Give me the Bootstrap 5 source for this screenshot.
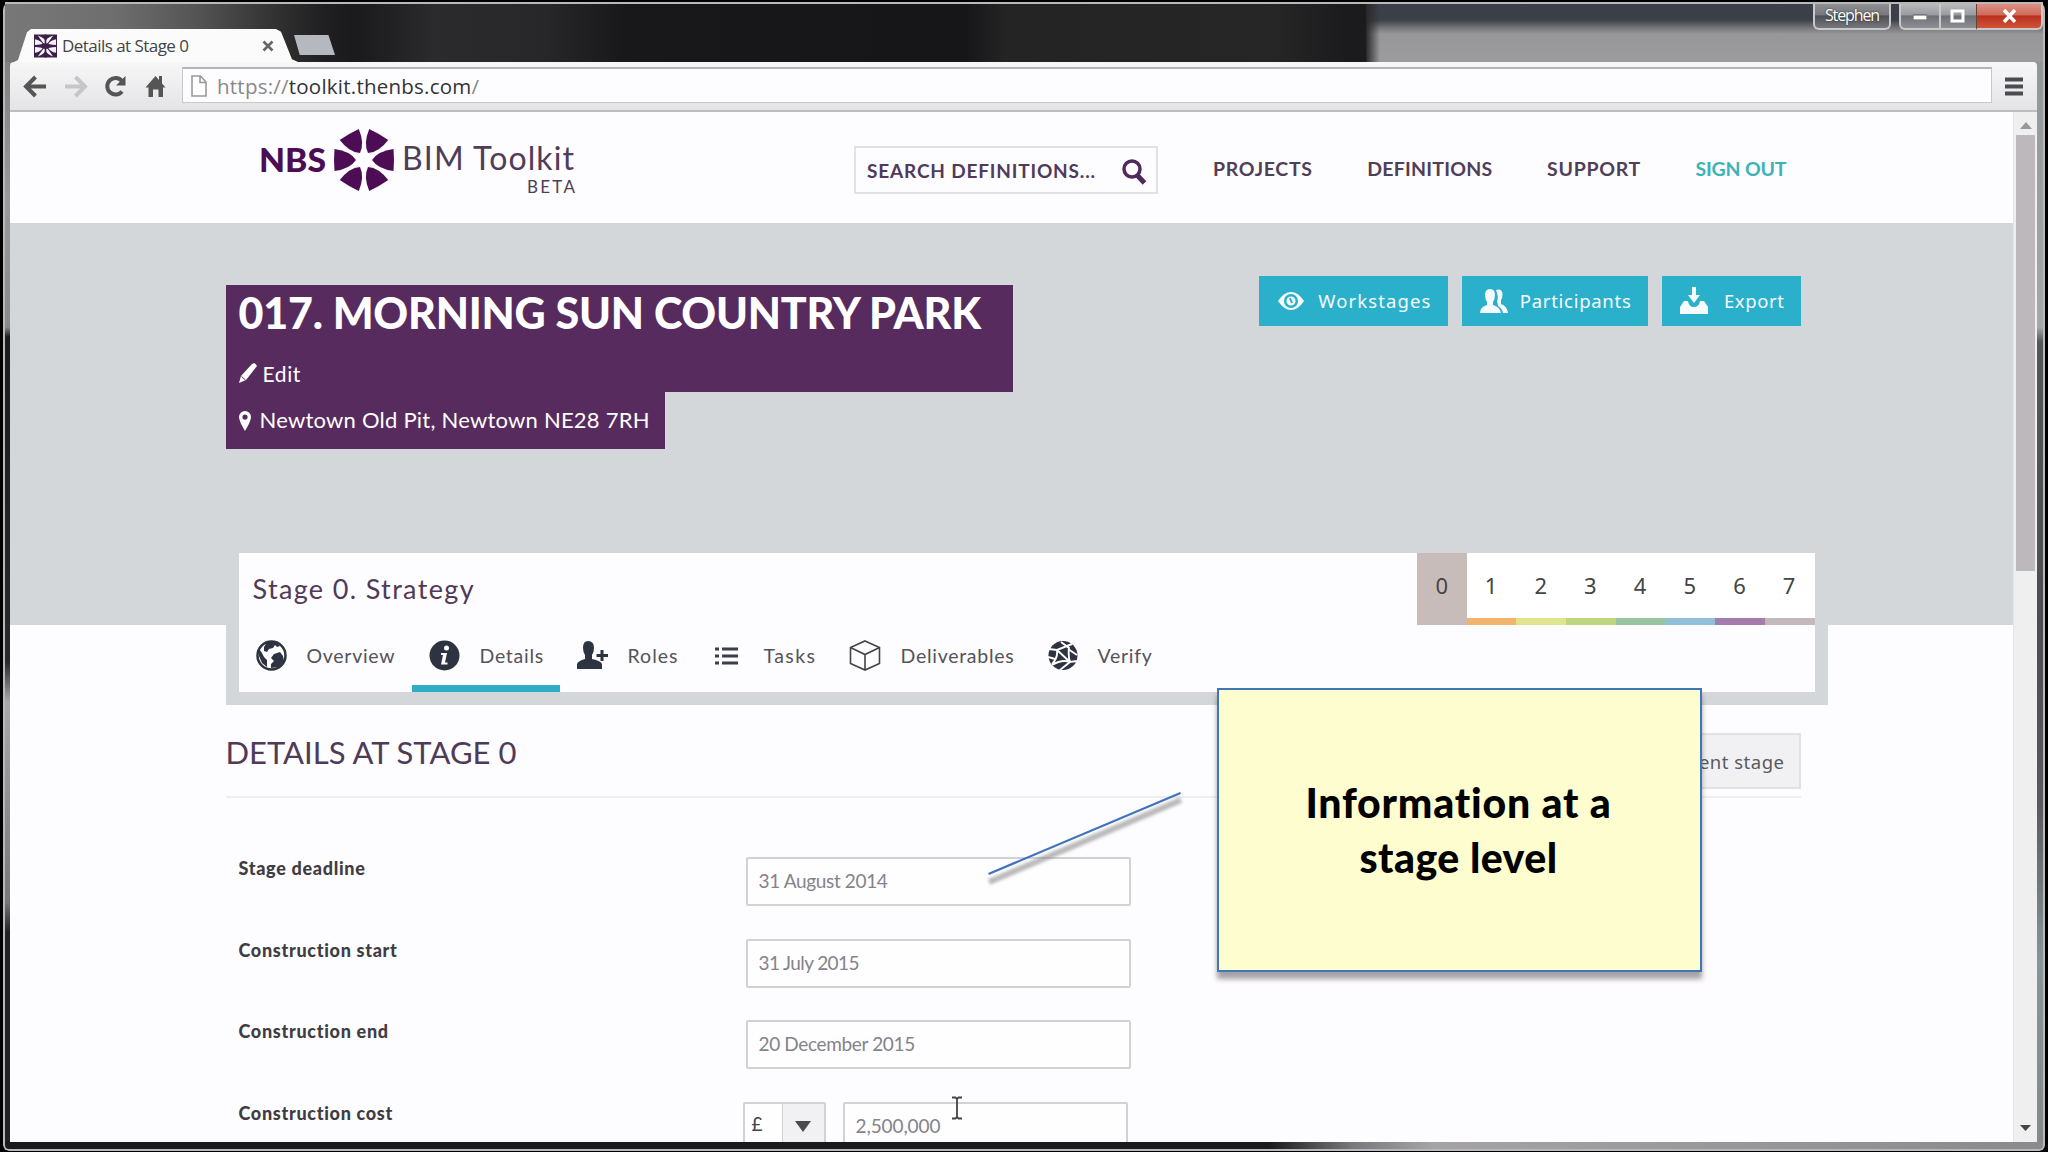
<!DOCTYPE html>
<html lang="en">
<head>
<meta charset="utf-8">
<title>Details at Stage 0</title>
<link href="https://cdn.jsdelivr.net/npm/bootstrap@5.3.0/dist/css/bootstrap.min.css" rel="stylesheet">
<style>
html,body{height:100%;overflow:hidden}
body{background:#000;font-family:Lato,"Open Sans",sans-serif;color:#4a4650;line-height:1.2}
svg{display:block;flex:none}
.t{white-space:nowrap;display:inline-block}
/* browser window */
.win{width:2042px;height:1149px;margin:2px 3px 0 3px;border-radius:8px 8px 6px 6px;box-shadow:inset 0 0 0 2px #b9b9bb;padding:0 8px 7px 7px;
 background:linear-gradient(90deg,#1b191b 0,#1b191b 62%,#77767a 66%,#a5a3a6 70%,#8b898c 100%) bottom/100% 10px no-repeat,
 linear-gradient(180deg,#8f9294 0,#a5a8aa 325px,#55565a 340px,#4c4d50 620px,#59595e 800px,#879698 960px,#858788 1149px) right/12px 100% no-repeat,
 linear-gradient(180deg,#777 0,#999 200px,#8a8a8a 325px,#1d1b1d 335px,#2a282a 660px,#a9a8aa 700px,#777 900px,#222 930px) left/9px 100% no-repeat,#222}
.titlebar{height:60px;border-top:2px solid #b9b9bb;margin:0 -6px 0 -5px;padding-left:5px;
 background:linear-gradient(90deg,rgba(40,40,42,1) 0,rgba(40,40,42,0) 14px) 1361px 0/14px 100% no-repeat,
 linear-gradient(180deg,#3b3f48 0,#3c4049 16px,#77777b 24px,#979699 30px,#9b9a9d 100%) 1361px 0/700px 100% no-repeat,
 linear-gradient(90deg,#787878 0,#6e6e6e 110px,#555 190px,#3a3a3a 250px,#1f1e20 320px,#1a191b 350px,#2b2a2c 430px,#272628 540px,#181719 620px,#161517 960px,#242425 1000px,#262627 1270px,#1b1a1c 1340px)}
.tab-shape{width:284px;height:33px;background:#fbfbfc;clip-path:polygon(0 100%,4px 94%,13px 10%,17px 0,262px 0,267px 8%,278px 92%,284px 100%);padding:0 24px 0 20px;margin-left:4px}
.tabtitle{font:17px/22px "Open Sans",sans-serif;color:#444;margin-left:5px;letter-spacing:-.54px}
.newtab{width:41px;height:20px;background:#b5b9bf;clip-path:polygon(0 0,84% 0,100% 100%,14% 100%);margin:0 0 7px -4px}
.cap{height:26px;border:2px solid #c9c9cc;border-top:0;border-radius:0 0 6px 6px;background:linear-gradient(#8f9093,#77787c 45%,#4f5056 50%,#77787c)}
.user{width:78px;font:16px/22px "Open Sans",sans-serif;color:#fff;text-shadow:0 0 2px #222;letter-spacing:-1.1px}
.minmax{width:77px;border-right:0;border-bottom-right-radius:0;background:linear-gradient(90deg,transparent 38px,#c9c9cc 38px,#c9c9cc 40px,transparent 40px),linear-gradient(#b9babd,#9b9c9f 45%,#6d6f75 50%,#8f9095)}
.closeb{width:67px;border-left:1px solid #643;border-bottom-left-radius:0;background:linear-gradient(#dd8f83,#cf6d5c 45%,#b9301c 50%,#d1533a)}
.toolbar{height:50px;background:linear-gradient(#f7f7f8,#e4e3e5);border-bottom:2px solid #bdbcbf;border-radius:4px 4px 0 0}
.address{width:1810px;height:36px;background:#fdfcfe;border:1px solid #c9c8cb;border-top:2px solid #b5b3b7;margin:5px 0 0 15px}
.url{font:20.5px/30px "Open Sans",sans-serif;color:#888;letter-spacing:.23px;margin-left:10px}
.url b{font-weight:400;color:#333}
.menu-ic{margin-left:13px}
/* site header */
.pageview{background:#fdfcfe;height:1030px;overflow:hidden}
.sitehead{height:111px}
.brand{margin-left:245px}
.searchbox{width:304px;height:48px;border:2px solid #e3e1e5;padding:2px 9px 0 11px;margin:34px 0 0 269px;font-size:19px;font-weight:700;color:#4f3a5c;letter-spacing:.83px}
.topnav{font-size:19.5px;font-weight:700;color:#4f4058;margin:45px 0 0 55px;gap:54.6px;letter-spacing:.24px}
.topnav .wide{letter-spacing:.69px}
.signout{color:#3db3b8;letter-spacing:-.19px}
/* project hero */
.herozone{height:402px;background:#d3d7da}
.wrap{width:1602px;margin-left:215.500px}
.titles{margin-top:62px}
.plum{background:#582b5f;color:#fff}
.plum-title{width:787px;height:107px;padding:6px 0 0 13px}
.plum-title h1{font-size:43px;line-height:43px;font-weight:900;margin:0;letter-spacing:-.22px}
.editrow{margin-top:27px;font-size:21px;gap:5px;letter-spacing:.6px}
.plum-place{width:439px;height:57px;padding:0 0 0 13px;font-size:22px;gap:9px;letter-spacing:.23px}
.acts{margin:53px 27px 0 0;gap:14px}
.act{height:50px;background:#2bb0cc;color:#f4fbfd;border-radius:0;border:0;padding:0 16px 0 17px;font-family:"Noto Sans",sans-serif;font-size:18.5px}
.a1{width:189px;letter-spacing:1.1px}.a2{width:186px;letter-spacing:.72px}.a3{width:139px;letter-spacing:.61px}
/* stage panel */
.stagepanel{height:152px;margin-top:-72px;background:#d3d7da;padding:0 13px 13px}
.stageinner{background:#fdfcfe;height:139px}
.stagerow{height:72px}
.stagename{font-size:27px;color:#4f3a58;padding:20px 0 0 14px;letter-spacing:1.35px}
.num{width:49.7px;height:72px;border-bottom:7px solid;padding-right:1px;font:22px/65px "Noto Sans",sans-serif;color:#444;text-align:center;background:#fff}
.n0{width:50px;padding:0;background:#c8bcbb;border-color:#c8bcbb}.n1{border-color:#f3b56d}.n2{border-color:#dfe48d}.n3{border-color:#bdd57c}.n4{border-color:#99c4a0}.n5{border-color:#8fbfdb}.n6{border-color:#a57cab}.n7{border-color:#c3b8bc}
.tabrow{height:67px;font-size:19.5px;color:#55535a;letter-spacing:.72px}
.tabitem{height:67px;border-bottom:7px solid transparent;padding:1px 0 0 17px;gap:20px}
.w1{width:173px}.w2{width:148px}.w3{width:138px;letter-spacing:1px}.w4{width:134px;gap:25px;letter-spacing:1.4px}.w5{width:199px}
.on{border-color:#30adc4}
/* details form */
.titleline{height:93px;border-bottom:2px solid #efedf0;width:1575px}
.titleline h2{font-size:31px;line-height:38px;margin:28px 0 0;font-weight:400;color:#4f3a58}
.cur{height:56px;background:#f1f0f2;border:2px solid #e2e1e4;border-radius:0;padding:0 14px;font:18.5px "Noto Sans",sans-serif;color:#5b5960;margin-top:28px;letter-spacing:.5px}
.formrows{padding-top:59px}
.fline{height:81.6px}
.lab{width:507px;padding:0 0 0 13px;font-size:18px;font-weight:900;color:#3f3d42;line-height:22px;letter-spacing:.69px}
.box{height:49px;border:2px solid #d3d1d5;border-radius:2px;background:#fefdff;font-size:19px;color:#858388;width:385px;padding-left:11px;margin-left:13px;letter-spacing:-.35px}
.july{letter-spacing:-.59px}
.sel{width:83px;margin-left:10px}
.pound{padding:9px 0 0 7px;color:#444}
.cost{width:285px;margin-left:17px;letter-spacing:-.1px}
.drop{width:42px;background:#f1f0f2;border-left:1px solid #d3d1d5}
.scroller{width:24px;background:#efeff0;border-left:1px solid #e6e5e8;padding:10px 0 11px}
.thumb{width:19px;height:436px;background:#bcb8bc;margin-top:6px}
/* annotations over the page */
.note{left:1217px;top:688px;width:485px;height:284px;background:#fefdd0;border:2px solid #3f76b6;box-shadow:0 7px 5px rgba(60,50,60,.45);font:900 41px/55px Lato,sans-serif;color:#000;letter-spacing:.45px;padding-right:2px}
.note .first{letter-spacing:.8px}
.pointer{left:980px;top:785px}
.ibeam{left:951px;top:1096px}
</style>
</head>
<body>
<div class="win d-flex flex-column position-absolute top-0 start-0">
 <div class="titlebar d-flex align-items-end flex-shrink-0">
  <div class="tab-shape d-flex align-items-center">
   <svg width="23" height="24" viewBox="0 0 24 24"><rect width="24" height="24" fill="#3b1f47"/><path d="M4 1Q12 4 12 8Q12 4 20 1L15 8 12 11 9 8zM4 23Q12 20 12 16Q12 20 20 23L15 16 12 13 9 16zM1 5Q7 6 9 10Q4 11 1 11zM23 5Q17 6 15 10Q20 11 23 11zM1 19Q7 18 9 14Q4 13 1 13zM23 19Q17 18 15 14Q20 13 23 13z" fill="#f6f0f8"/><path d="M12 0v24" stroke="#3b1f47" stroke-width="1.700"/><circle cx="12" cy="12" r="3" fill="#3b1f47"/></svg>
   <span class="t tabtitle">Details at Stage 0</span>
   <svg class="ms-auto" width="12" height="12" viewBox="0 0 12 12"><path d="M1.500 1.500l9 9M10.500 1.500l-9 9" stroke="#666" stroke-width="2.600"/></svg>
  </div>
  <div class="newtab"></div>
  <div class="d-flex ms-auto align-self-start">
   <div class="cap user text-center me-2"><span class="t">Stephen</span></div>
   <div class="cap minmax d-flex align-items-center justify-content-around"><svg width="14" height="8"><rect y="3" width="14" height="5" fill="#fff" stroke="#555"/></svg><svg width="15" height="14"><rect x="2" y="2" width="11" height="10" fill="none" stroke="#fff" stroke-width="3"/></svg></div>
   <div class="cap closeb d-flex align-items-center justify-content-center"><svg width="15" height="14" viewBox="0 0 15 14"><path d="M2 1l11 12M13 1L2 13" stroke="#fff" stroke-width="3.500"/></svg></div>
  </div>
 </div>
 <div class="toolbar d-flex flex-shrink-0">
  <svg width="157" height="48" viewBox="10 62 157 48" fill="none">
   <path d="M46 86.500H27M35.500 77l-9.500 9.500 9.500 9.500" stroke="#555" stroke-width="4"/>
   <path d="M65 86.500h19M75.500 77l9.500 9.500-9.500 9.500" stroke="#c6c5c8" stroke-width="4"/>
   <path d="M122 81a8.300 8.300 0 1 0 0 10.500" stroke="#555" stroke-width="4"/><path d="M125.500 76v9.500h-9.500z" fill="#555"/>
   <path d="M145.500 87.500L155.500 76l3.500 4v-4h3v7.500l3.500 4h-2.500V97h-4.500v-7.500h-5.500V97h-4.500v-9.500z" fill="#555"/>
  </svg>
  <div class="address d-flex align-items-center"><svg class="ms-2" width="16" height="22" viewBox="0 0 16 22"><path d="M1 1h8.500l5.500 6v14H1zM9 1v6.500h6" fill="#fff" stroke="#999" stroke-width="1.600"/></svg>
  <span class="t url">https://<b>toolkit.thenbs.com</b>/</span></div>
  <svg class="menu-ic" width="22" height="48"><path d="M0 17.500h18M0 24.500h18M0 31.500h18" stroke="#4d4b50" stroke-width="4"/></svg>
 </div>
 <div class="pageview d-flex">
  <div class="flex-grow-1">
   <header class="sitehead d-flex">
    <svg class="brand" width="330" height="100" viewBox="255 112 330 100" font-family="Lato, sans-serif">
     <text x="259" y="172" font-size="33" font-weight="900" fill="#4c0d55" textLength="67" lengthAdjust="spacingAndGlyphs">NBS</text>
     <g transform="translate(364 160)" fill="#4c0d55"><g id="pt"><path d="M-29.500-11Q-14-9-8 0Q-14 9-29.500 11Q-30.500 0-29.500-11Z"/><path d="M-29.500-11Q-14-9-8 0Q-14 9-29.500 11Q-30.500 0-29.500-11Z" transform="rotate(60)"/><path d="M-29.500-11Q-14-9-8 0Q-14 9-29.500 11Q-30.500 0-29.500-11Z" transform="rotate(120)"/></g><use href="#pt" transform="rotate(180)"/></g>
     <text x="402" y="170" font-size="32" fill="#503c58" textLength="172" lengthAdjust="spacing">BIM Toolkit</text>
     <text x="527" y="193" font-size="17" fill="#503c58" textLength="48" lengthAdjust="spacing">BETA</text>
    </svg>
    <div class="searchbox d-flex align-items-center justify-content-between"><span class="t">SEARCH DEFINITIONS...</span>
     <svg width="27" height="27" viewBox="0 0 27 27"><circle cx="12" cy="11" r="8" fill="none" stroke="#4f2a5c" stroke-width="3.500"/><path d="M17 17l7.500 8" stroke="#4f2a5c" stroke-width="5"/></svg></div>
    <nav class="topnav d-flex"><span class="t wide">PROJECTS</span><span class="t">DEFINITIONS</span><span class="t wide">SUPPORT</span><span class="t signout">SIGN OUT</span></nav>
   </header>
   <section class="herozone">
    <div class="wrap d-flex justify-content-between align-items-start">
     <div class="titles">
      <div class="plum plum-title"><h1 class="t d-block">017. MORNING SUN COUNTRY PARK</h1>
       <div class="editrow d-flex align-items-center"><svg width="19" height="21" viewBox="0 0 19 21"><path d="M0 20l2-7L13 1q3-2 5 2L7 17z" fill="#fff"/><path d="M2.500 13.500l4 3.500" stroke="#582b5f"/></svg><span class="t">Edit</span></div></div>
      <div class="plum plum-place d-flex align-items-center"><svg width="12" height="20" viewBox="0 0 12 20"><path fill-rule="evenodd" d="M6 0a6 6 0 0 1 6 6q0 4-6 14Q0 10 0 6a6 6 0 0 1 6-6zM6 3.500a2.600 2.600 0 1 0 0 5.200a2.600 2.600 0 0 0 0-5.200z" fill="#fff"/></svg><span class="t">Newtown Old Pit, Newtown NE28 7RH</span></div>
     </div>
     <div class="acts d-flex">
      <button class="act a1 btn d-flex align-items-center"><svg width="30" height="30" viewBox="0 0 30 30"><path d="M2 15Q8 6 15 6T28 15Q22 24 15 24T2 15z" fill="#f4fbfd"/><circle cx="15" cy="15" r="5.800" fill="none" stroke="#2bb0cc" stroke-width="2.500"/><path d="M14 12l2 5" stroke="#2bb0cc" stroke-width="2"/></svg><span class="t ms-auto">Workstages</span></button>
      <button class="act a2 btn d-flex align-items-center"><svg width="30" height="30" viewBox="0 0 30 30"><path d="M17 4q6-2 6.500 4 0 4-1.500 6v4q6 2 7 9h-5q-1-5-5-7 0-3-1-4 2-5-1-12z" fill="#f4fbfd"/><path d="M11 3q5 0 5 6 0 4-2 7v3q7 2 8 8H1q0-6 7-8v-3q-2-3-2-7 0-6 5-6z" fill="#f4fbfd"/></svg><span class="t ms-auto">Participants</span></button>
      <button class="act a3 btn d-flex align-items-center"><svg width="30" height="30" viewBox="0 0 30 30"><path d="M13 1h4v8h4l-6 8-6-8h4zM5 15l4 0q1 6 6 6t6-6h4l4 6v7H1v-7z" fill="#f4fbfd"/></svg><span class="t ms-auto">Export</span></button>
     </div>
    </div>
   </section>
   <div class="wrap">
    <div class="stagepanel"><div class="stageinner">
     <div class="stagerow d-flex justify-content-between"><div class="stagename"><span class="t">Stage 0. Strategy</span></div>
      <div class="d-flex"><div class="num n0">0</div><div class="num n1">1</div><div class="num n2">2</div><div class="num n3">3</div><div class="num n4">4</div><div class="num n5">5</div><div class="num n6">6</div><div class="num n7">7</div></div></div>
     <div class="tabrow d-flex">
      <div class="tabitem w1 d-flex align-items-center"><svg width="31" height="31" viewBox="0 0 31 31"><circle cx="15.500" cy="15.500" r="14" fill="#fff" stroke="#2d3340" stroke-width="2.500"/><path d="M11 2l9 0 4 4-3 1-2-2-2 3-4 1-2 3-3-1 0-4zM3 9l3 4 2 4 3 3 0 7-5-4-3-7zM18 14l6-2 3 4 1 5-5 6-8 1 0-4 3-3-3-3z" fill="#2d3340"/></svg><span class="t">Overview</span></div>
      <div class="tabitem on w2 d-flex align-items-center"><svg width="31" height="31" viewBox="0 0 31 31"><circle cx="15.500" cy="15.500" r="15" fill="#2d3340"/><circle cx="17.500" cy="8" r="2.500" fill="#fff"/><path d="M12 13h6l-2 9.500h2.500v2H12l2-9.500h-2z" fill="#fff"/></svg><span class="t">Details</span></div>
      <div class="tabitem w3 d-flex align-items-center"><svg width="31" height="31" viewBox="0 0 31 31"><path d="M11 1q6 0 6 7 0 4-2 7v4q9 2 10 5v5H0v-5q1-3 8-5v-4q-2-3-2-7 0-7 5-7z" fill="#2d3340"/><path d="M25 10v11M19.500 15.500H31" stroke="#2d3340" stroke-width="3"/></svg><span class="t">Roles</span></div>
      <div class="tabitem w4 d-flex align-items-center"><svg width="24" height="20" viewBox="0 0 24 20"><path d="M0 3h4M7 3h16M0 10h4M7 10h16M0 17h4M7 17h16" stroke="#3b3d47" stroke-width="3"/></svg><span class="t">Tasks</span></div>
      <div class="tabitem w5 d-flex align-items-center"><svg width="32" height="31" viewBox="0 0 32 31"><path d="M16 1l14.500 6.500v16L16 30 1.500 23.500v-16zM1.500 7.500L16 14.500l14.500-7M16 14.500V30" fill="none" stroke="#44424a" stroke-width="1.600"/></svg><span class="t">Deliverables</span></div>
      <div class="tabitem d-flex align-items-center"><svg width="30" height="31" viewBox="0 0 30 31"><circle cx="15" cy="15.500" r="14.500" fill="#2d3340"/><path d="M1 9l8 1L24 4M9 10q1 8-5 14M9 10l13 12M13 2l8 6q-1 8 1 14l7-1M20 9l9 6M22 22q-8-3-18 3M22 22L12 30M0 17l7 2" fill="none" stroke="#fff" stroke-width="1.900"/></svg><span class="t">Verify</span></div>
     </div>
    </div></div>
    <div class="titleline d-flex justify-content-between"><h2><span class="t">DETAILS AT STAGE 0</span></h2><button class="cur btn"><span class="t">Set as current stage</span></button></div>
    <div class="formrows">
     <div class="fline d-flex"><div class="lab"><span class="t">Stage deadline</span></div><div class="box d-flex align-items-center"><span class="t">31 August 2014</span></div></div>
     <div class="fline d-flex"><div class="lab"><span class="t">Construction start</span></div><div class="box july d-flex align-items-center"><span class="t">31 July 2015</span></div></div>
     <div class="fline d-flex"><div class="lab"><span class="t">Construction end</span></div><div class="box d-flex align-items-center"><span class="t">20 December 2015</span></div></div>
     <div class="fline d-flex"><div class="lab"><span class="t">Construction cost</span></div><div class="box sel d-flex p-0"><span class="pound flex-grow-1">£</span><div class="drop d-flex align-items-center justify-content-center"><svg width="16" height="11"><path d="M0 0h16L8 11z" fill="#4b4a4e"/></svg></div></div><div class="box cost d-flex align-items-center"><span class="t">2,500,000</span></div></div>
    </div>
   </div>
  </div>
  <div class="scroller d-flex flex-column align-items-center"><svg width="12" height="7"><path d="M6 0l6 7H0z" fill="#98979a"/></svg><div class="thumb"></div><svg class="mt-auto" width="11" height="6"><path d="M0 0h11L5.500 6z" fill="#444"/></svg></div>
 </div>
</div>
<svg class="pointer position-absolute" width="210" height="105" viewBox="980 785 210 105"><defs><filter id="soft"><feGaussianBlur stdDeviation="1.800"/></filter></defs><path d="M989 882L1181 800" stroke="#777" stroke-opacity=".5" stroke-width="6" filter="url(#soft)"/><path d="M988.500 874L1180.500 793" stroke="#3f74bd" stroke-width="2.200"/></svg>
<svg class="ibeam position-absolute" width="12" height="24" viewBox="0 0 12 24"><path d="M1 1.500h3.500L6 3l1.500-1.500H11M6 2.500v19M1 22.500h3.500L6 21l1.500 1.500H11" fill="none" stroke="#444" stroke-width="1.800"/></svg>
<div class="note position-absolute d-flex flex-column align-items-center justify-content-center"><span class="t first">Information at a</span><span class="t">stage level</span></div>
<script src="https://cdn.jsdelivr.net/npm/bootstrap@5.3.0/dist/js/bootstrap.bundle.min.js"></script>
</body>
</html>
